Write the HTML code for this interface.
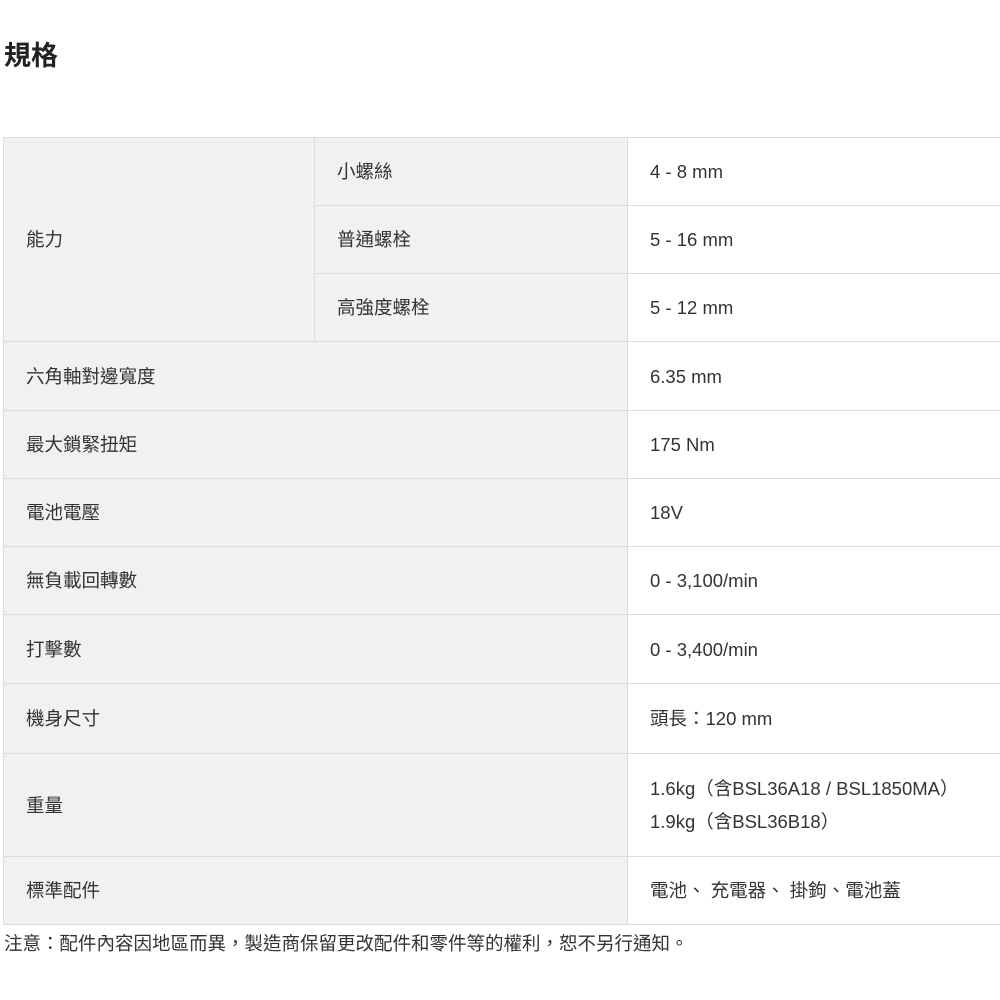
<!DOCTYPE html>
<html><head><meta charset="utf-8"><style>
body{margin:0;background:#fff;width:1000px;height:1000px;overflow:hidden;font-family:"Liberation Sans","Noto Sans CJK TC",sans-serif;color:#333;position:relative}
h1{position:absolute;left:4px;top:38px;margin:0;font-size:27px;line-height:36px;font-weight:bold;color:#222}
.c{position:absolute;box-sizing:border-box;border:1px solid #dcdcdc;font-size:18.5px;display:flex;align-items:center;padding-left:22px;line-height:33px}
.g{background:#f1f1f1}
.w{background:#fff}
.note{position:absolute;left:4px;top:930px;font-size:18.5px;color:#333}
</style></head><body>
<h1>規格</h1>
<div class="c g" style="left:3px;top:137px;width:312px;height:205px">能力</div>
<div class="c g" style="left:314px;top:137px;width:314px;height:69px">小螺絲</div>
<div class="c g" style="left:314px;top:205px;width:314px;height:69px">普通螺栓</div>
<div class="c g" style="left:314px;top:273px;width:314px;height:69px">高強度螺栓</div>
<div class="c w" style="left:627px;top:137px;width:380px;height:69px">4 - 8 mm</div>
<div class="c w" style="left:627px;top:205px;width:380px;height:69px">5 - 16 mm</div>
<div class="c w" style="left:627px;top:273px;width:380px;height:69px">5 - 12 mm</div>

<div class="c g" style="left:3px;top:341px;width:625px;height:70px">六角軸對邊寬度</div>
<div class="c w" style="left:627px;top:341px;width:380px;height:70px">6.35 mm</div>
<div class="c g" style="left:3px;top:410px;width:625px;height:69px">最大鎖緊扭矩</div>
<div class="c w" style="left:627px;top:410px;width:380px;height:69px">175 Nm</div>
<div class="c g" style="left:3px;top:478px;width:625px;height:69px">電池電壓</div>
<div class="c w" style="left:627px;top:478px;width:380px;height:69px">18V</div>
<div class="c g" style="left:3px;top:546px;width:625px;height:69px">無負載回轉數</div>
<div class="c w" style="left:627px;top:546px;width:380px;height:69px">0 - 3,100/min</div>
<div class="c g" style="left:3px;top:614px;width:625px;height:70px">打擊數</div>
<div class="c w" style="left:627px;top:614px;width:380px;height:70px">0 - 3,400/min</div>
<div class="c g" style="left:3px;top:683px;width:625px;height:71px">機身尺寸</div>
<div class="c w" style="left:627px;top:683px;width:380px;height:71px">頭長：120 mm</div>
<div class="c g" style="left:3px;top:753px;width:625px;height:104px">重量</div>
<div class="c w" style="left:627px;top:753px;width:380px;height:104px">1.6kg（含BSL36A18 / BSL1850MA）<br>1.9kg（含BSL36B18）</div>
<div class="c g" style="left:3px;top:856px;width:625px;height:69px">標準配件</div>
<div class="c w" style="left:627px;top:856px;width:380px;height:69px">電池、 充電器、 掛鉤、電池蓋</div>
<div class="note">注意：配件內容因地區而異，製造商保留更改配件和零件等的權利，恕不另行通知。</div>
</body></html>
